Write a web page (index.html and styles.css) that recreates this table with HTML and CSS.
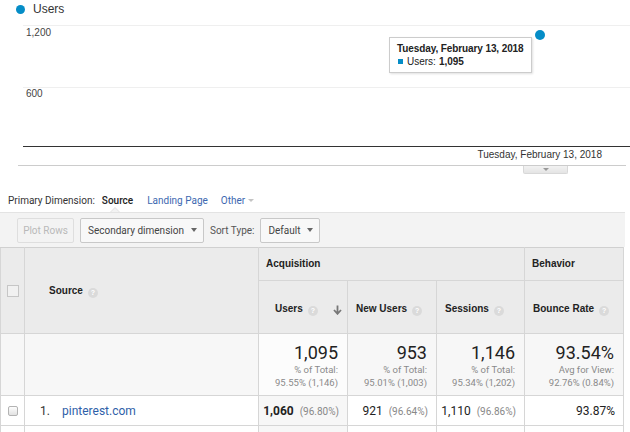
FILE: index.html
```html
<!DOCTYPE html>
<html>
<head>
<meta charset="utf-8">
<link rel="stylesheet" href="styles.css">
</head>
<body>
<div class="legend"><span class="legend-dot"></span><span class="legend-label">Users</span></div>

<div class="chart">
  <div class="grid grid-top"></div>
  <div class="ylabel ylabel-top">1,200</div>
  <div class="grid grid-mid"></div>
  <div class="ylabel ylabel-mid">600</div>
  <div class="axis"></div>
  <div class="xlabel">Tuesday, February 13, 2018</div>
  <div class="baseline"></div>
  <div class="tab"><span class="tab-arrow"></span></div>
  <div class="point"></div>
  <div class="tooltip">
    <div class="tip-title">Tuesday, February 13, 2018</div>
    <div class="tip-row"><span class="tip-swatch"></span>Users: <b>1,095</b></div>
  </div>
</div>

<div class="dims">
  <span class="dims-label">Primary Dimension:</span>
  <span class="dims-active">Source</span>
  <span class="dims-link">Landing Page</span>
  <span class="dims-link">Other <span class="caret-light"></span></span>
</div>

<div class="toolbar">
  <span class="notch"></span>
  <button class="btn btn-disabled">Plot Rows</button>
  <button class="btn btn-select">Secondary dimension <span class="caret"></span></button>
  <span class="toolbar-label">Sort Type:</span>
  <button class="btn btn-select">Default <span class="caret"></span></button>
</div>

<table class="report">
  <colgroup>
    <col class="c-chk"><col class="c-src"><col class="c-num"><col class="c-num"><col class="c-num2"><col class="c-bounce">
  </colgroup>
  <thead>
    <tr class="hrow1">
      <th rowspan="2" class="chk-cell"><span class="hcheck"></span></th>
      <th rowspan="2" class="src-head">Source<span class="help">?</span></th>
      <th colspan="3" class="group">Acquisition</th>
      <th class="group">Behavior</th>
    </tr>
    <tr class="hrow2">
      <th class="metric metric-sorted">Users<span class="help">?</span><svg class="sort" width="9" height="10" viewBox="0 0 9 10"><path d="M4.5 0.5v7M1 5l3.5 3.8L8 5" fill="none" stroke="#777" stroke-width="1.8"/></svg></th>
      <th class="metric">New Users<span class="help">?</span></th>
      <th class="metric">Sessions<span class="help">?</span></th>
      <th class="metric">Bounce Rate<span class="help">?</span></th>
    </tr>
  </thead>
  <tbody>
    <tr class="totals">
      <td class="chk-cell"></td>
      <td></td>
      <td class="tot sorted"><div class="big">1,095</div><div class="sub">% of Total:</div><div class="sub">95.55% (1,146)</div></td>
      <td class="tot"><div class="big">953</div><div class="sub">% of Total:</div><div class="sub">95.01% (1,003)</div></td>
      <td class="tot"><div class="big">1,146</div><div class="sub">% of Total:</div><div class="sub">95.34% (1,202)</div></td>
      <td class="tot"><div class="big">93.54%</div><div class="sub">Avg for View:</div><div class="sub">92.76% (0.84%)</div></td>
    </tr>
    <tr class="data">
      <td class="chk-cell"><span class="rcheck"></span></td>
      <td class="src"><span class="idx">1.</span><a class="src-link">pinterest.com</a></td>
      <td class="num sorted"><b>1,060</b> <span class="pct">(96.80%)</span></td>
      <td class="num">921 <span class="pct">(96.64%)</span></td>
      <td class="num">1,110 <span class="pct">(96.86%)</span></td>
      <td class="num">93.87%</td>
    </tr>
    <tr class="data empty">
      <td class="chk-cell"></td><td></td><td class="sorted"></td><td></td><td></td><td></td>
    </tr>
  </tbody>
</table>
</body>
</html>
```

FILE: styles.css
```css
* { box-sizing: border-box; }
body {
  margin: 0;
  background: #fff;
  font-family: Roboto, "Liberation Sans", Arial, sans-serif;
  color: #333;
  overflow: hidden;
}

/* legend */
.legend {
  height: 18px;
  display: flex;
  align-items: center;
  padding-left: 16px;
  gap: 8px;
  font-family: "Liberation Sans", Arial, sans-serif;
  font-size: 12px;
  color: #333;
}
.legend-dot {
  width: 9px;
  height: 9px;
  border-radius: 50%;
  background: #058dc7;
}

/* chart canvas */
.chart {
  position: relative;
  height: 170px;
  font-family: "Liberation Sans", Arial, sans-serif;
  font-size: 10px;
  color: #444;
}
.grid { position: absolute; left: 23px; right: 0; height: 1px; background: #efefef; }
.grid-top { top: 7px; }
.grid-mid { top: 69px; }
.ylabel { position: absolute; left: 26px; line-height: 12px; }
.ylabel-top { top: 9px; }
.ylabel-mid { top: 70px; }
.axis { position: absolute; left: 23px; right: 0; top: 128px; height: 1px; background: #333; }
.xlabel { position: absolute; right: 28px; top: 131px; line-height: 12px; color: #333; }
.baseline { position: absolute; left: 18px; right: 4px; top: 147px; height: 1px; background: #ccc; }
.tab {
  position: absolute;
  left: 523px;
  top: 148px;
  width: 45px;
  height: 8px;
  background: linear-gradient(#f2f2f2, #e4e4e4);
  border: 1px solid #d8d8d8;
  border-top: none;
  border-radius: 0 0 2px 2px;
  display: flex;
  justify-content: center;
  padding-top: 2px;
}
.tab-arrow {
  width: 0; height: 0;
  border-left: 3px solid transparent;
  border-right: 3px solid transparent;
  border-top: 3px solid #999;
}
.point {
  position: absolute;
  left: 535px;
  top: 12px;
  width: 10px;
  height: 10px;
  border-radius: 50%;
  background: #058dc7;
}
.tooltip {
  position: absolute;
  left: 389px;
  top: 19px;
  width: 143px;
  height: 36px;
  background: #fff;
  border: 1px solid #ccc;
  box-shadow: 1px 1px 2px rgba(0,0,0,0.12);
  padding: 4px 0 0 7px;
  color: #222;
  font-size: 10px;
  white-space: nowrap;
}
.tip-title { font-weight: bold; line-height: 13px; letter-spacing: -0.1px; }
.tip-row { line-height: 13px; display: flex; align-items: center; }
.tip-row b { margin-left: 3px; }
.tip-swatch { width: 5px; height: 5px; background: #058dc7; margin: 0 4px 0 1px; }

/* primary dimension */
.dims {
  height: 24px;
  display: flex;
  align-items: center;
  padding-left: 8px;
  font-size: 10px;
  color: #333;
}
.dims-label { margin-right: 7px; }
.dims-active { color: #222; font-weight: 500; margin-right: 14px; }
.dims-link { color: #3c67b0; margin-right: 13px; display: inline-flex; align-items: center; }
.caret-light {
  margin-left: 3px;
  width: 0; height: 0;
  border-left: 3.5px solid transparent;
  border-right: 3.5px solid transparent;
  border-top: 3.5px solid #c4c4c4;
}

/* toolbar */
.toolbar {
  position: relative;
  width: 625px;
  height: 35px;
  background: #f3f3f3;
  border-top: 1px solid #e3e3e3;
  display: flex;
  align-items: center;
  padding-left: 17px;
  gap: 6px;
}
.notch {
  position: absolute;
  left: 110px;
  top: -6px;
  width: 0; height: 0;
  border-left: 5px solid transparent;
  border-right: 5px solid transparent;
  border-bottom: 5px solid #e3e3e3;
}
.notch::after {
  content: "";
  position: absolute;
  left: -4px;
  top: 1px;
  border-left: 4px solid transparent;
  border-right: 4px solid transparent;
  border-bottom: 4px solid #f3f3f3;
}
.btn {
  height: 25px;
  font-family: Roboto, "Liberation Sans", Arial, sans-serif;
  font-size: 10px;
  border-radius: 2px;
  padding: 0 7px;
  display: inline-flex;
  align-items: center;
  white-space: nowrap;
}
.btn-disabled {
  width: 57px;
  justify-content: center;
  padding: 0;
  background: #f3f3f3;
  border: 1px solid #dedede;
  color: #b9b9b9;
}
.btn-select {
  background: #f8f8f8;
  border: 1px solid #c8c8c8;
  color: #444;
  padding: 0 6px 0 7px;
}
.caret {
  width: 0; height: 0;
  border-left: 3px solid transparent;
  border-right: 3px solid transparent;
  border-top: 4px solid #666;
  margin-left: 7px;
}
.toolbar-label { font-size: 10px; color: #555; }

/* table */
.report {
  width: 624px;
  border-collapse: collapse;
  table-layout: fixed;
  font-size: 12px;
  color: #222;
}
.c-chk { width: 24px; }
.c-src { width: 234px; }
.c-num { width: 89px; }
.c-num2 { width: 88px; }
.c-bounce { width: 99px; }
.report th, .report td { border: 1px solid #d6d6d6; padding: 0; }
.report thead th {
  background: #ebebeb;
  font-family: "Liberation Sans", Arial, sans-serif;
  font-size: 10px;
  font-weight: bold;
  color: #222;
  text-align: left;
  white-space: nowrap;
}
.hrow1 th { height: 33px; border-top: 1px solid #d0d0d0; }
.hrow2 th { height: 53px; padding-top: 5px !important; }
.report thead th.src-head { padding-top: 2px !important; }
.chk-cell { text-align: center; }
.report thead th.chk-cell { text-align: center; padding-top: 2px; }
.hcheck {
  display: inline-block;
  width: 12px;
  height: 12px;
  border: 1px solid #c6c6c6;
  background: #f1f1f1;
}
.src-head { padding-left: 24px !important; }
.group { padding-left: 7px !important; padding-bottom: 1px !important; }
.metric { padding-left: 8px !important; position: relative; }
.metric-sorted { padding-left: 16px !important; }
.metric .sort {
  position: absolute;
  right: 5px;
  top: 24px;
}
.help {
  display: inline-flex;
  align-items: center;
  justify-content: center;
  width: 10px;
  height: 10px;
  border-radius: 50%;
  background: #dadada;
  color: #fff;
  font-size: 7px;
  font-weight: bold;
  margin-left: 5px;
  vertical-align: -1px;
}

.totals td { height: 62px; background: #f7f7f7; vertical-align: top; }
.totals td.sorted { background: #fcfcfc; }
.tot { text-align: right; padding: 9px 9px 0 0 !important; }
.big { font-size: 18px; line-height: 20px; color: #222; }
.sub { font-size: 9.5px; line-height: 13px; color: #8a8a8a; }

.data td { height: 30px; background: #fff; }
.data td.sorted { background: #f7f7f7; }
.rcheck {
  display: inline-block;
  width: 10px;
  height: 10px;
  border: 1px solid #b3b3b3;
  border-radius: 2px;
  background: linear-gradient(#fdfdfd, #e2e2e2);
  vertical-align: middle;
}
.src { padding-left: 15px !important; font-size: 12px; }
.idx { color: #333; display: inline-block; width: 22px; }
.src-link { color: #2f5fa9; text-decoration: none; }
.num { text-align: right; padding-right: 8px !important; white-space: nowrap; }
.num b { font-weight: bold; }
.pct { font-size: 10px; color: #888; margin-left: 3px; }
.empty td { height: 20px; }
```
